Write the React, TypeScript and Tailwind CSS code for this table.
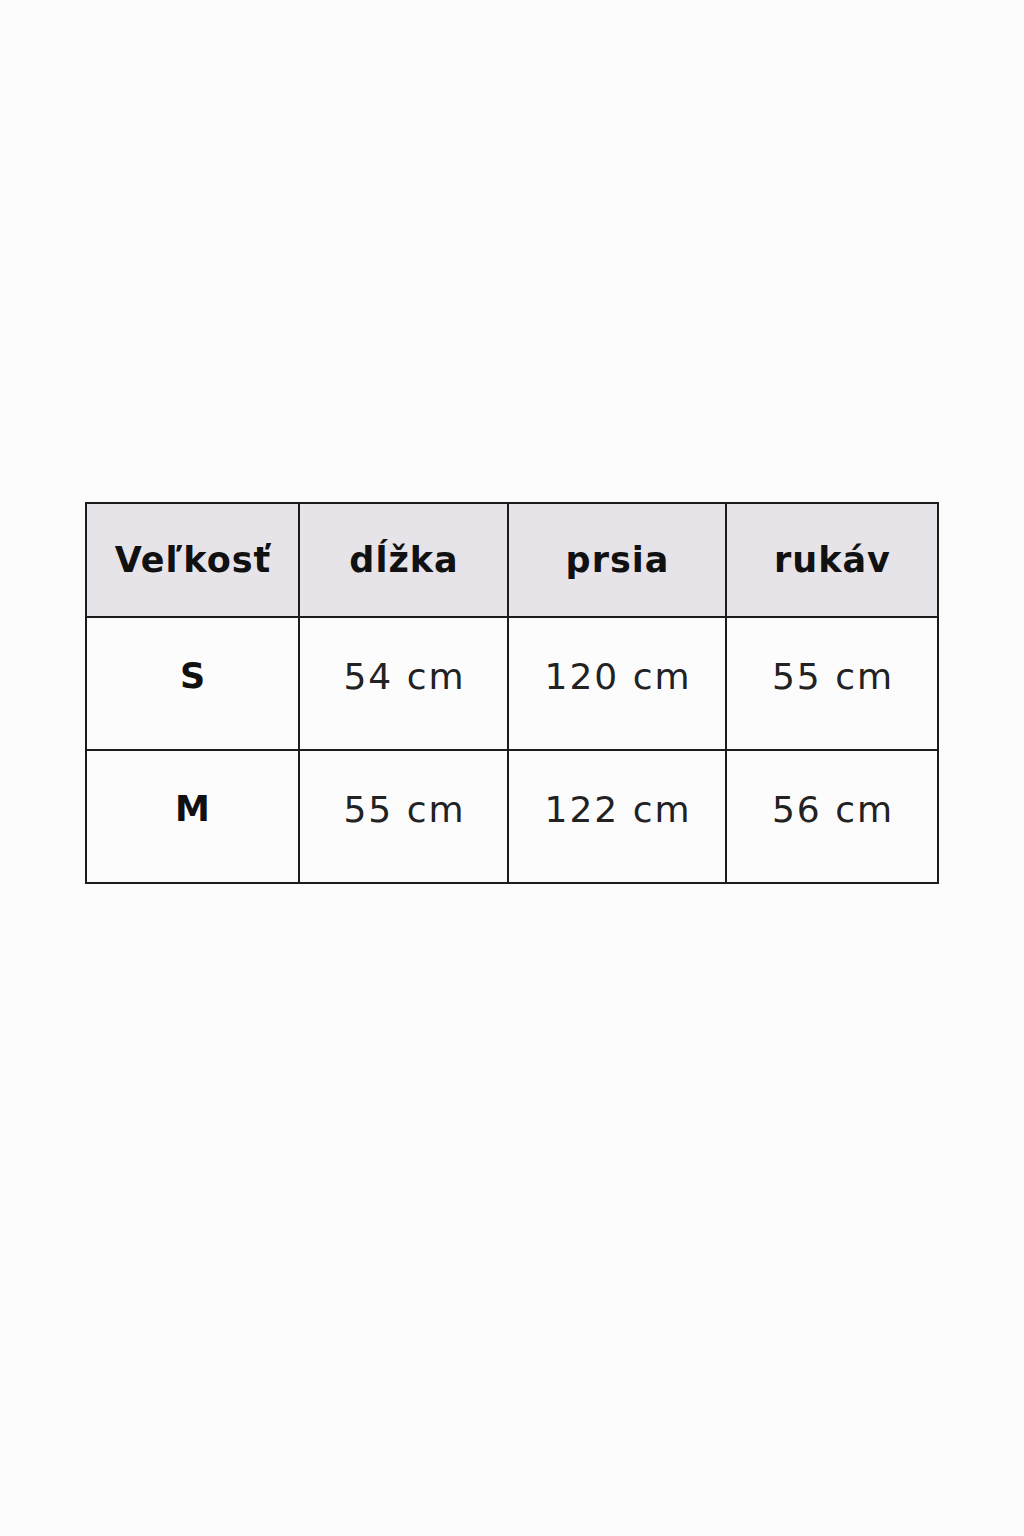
const headers = ["Veľkosť", "dĺžka", "prsia", "rukáv"];

const rows = [
  { size: "S", values: ["54 cm", "120 cm", "55 cm"] },
  { size: "M", values: ["55 cm", "122 cm", "56 cm"] },
];

const cols = "grid grid-cols-[211px_209px_218px_212px]";

export default function App() {
  return (
    <div className="w-[1024px] h-[1536px] bg-[#fdfcfd] pt-[502px] pl-[85px] font-['DejaVu_Sans',sans-serif] text-[#111]">
      <div className="w-[854px] border-2 border-[#1c1c1c]">
        <div className={`${cols} h-[112px] bg-[#e6e4e8]`}>
          {headers.map((h, i) => (
            <div
              key={h}
              className={`flex items-center justify-center pl-[1px] text-[35px] font-bold tracking-[1px] ${i > 0 ? "border-l-2 border-[#1c1c1c]" : ""}`}
            >
              {h}
            </div>
          ))}
        </div>
        {rows.map((r) => (
          <div key={r.size} className={`${cols} h-[133px] border-t-2 border-[#1c1c1c]`}>
            <div className="flex items-center justify-center pb-[14px] text-[35px] font-bold">{r.size}</div>
            {r.values.map((v, i) => (
              <div
                key={i}
                className="flex items-center justify-center border-l-2 border-[#1c1c1c] pb-[14px] pl-[2px] text-[36px] tracking-[2px] text-[#222]"
              >
                {v}
              </div>
            ))}
          </div>
        ))}
      </div>
    </div>
  );
}
